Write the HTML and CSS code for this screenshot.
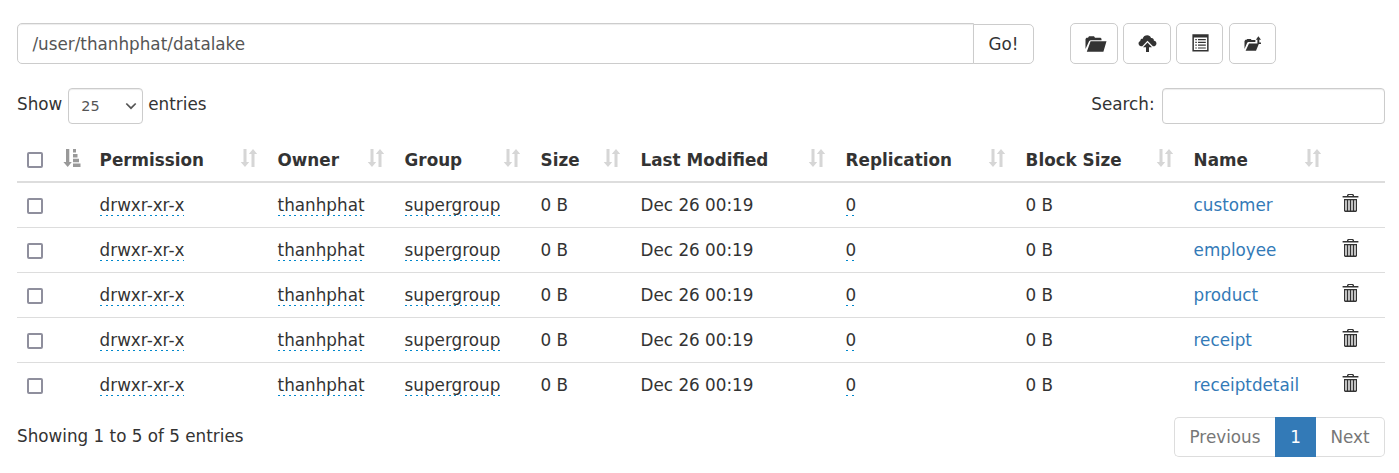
FILE: index.html
```
<!DOCTYPE html>
<html lang="en">
<head>
<meta charset="utf-8">
<title>Browse Directory</title>
<link rel="stylesheet" href="styles.css">
</head>
<body>
<svg class="defs" aria-hidden="true">
  <symbol id="sort" viewBox="0 0 18 18"><path d="M3.500 0h3v13h2.700L5 18 .700 13h2.800zM11.500 18h3V5h2.700L13 0 8.800 5h2.700z"/></symbol>
  <symbol id="sorted" viewBox="0 0 18 18"><path d="M3 0h3.300v13h2.500L4.700 18 .400 13H3zM10 0h3v3.400h-3zM10 5h4.500v3.400H10zM10 9.800h6v3.400h-6zM10 14.600h7.500V18H10z"/></symbol>
  <symbol id="trash" viewBox="0 0 17 18"><path fill-rule="evenodd" d="M5 2V1l1-1h5l1 1v1h4.400v1.500H.6V2zm1.500 0h4v-.9h-4zM2 5h13v12l-1 1H3l-1-1zm1.300 1.300v10.300h1.400V6.300zm3 0v10.300h1.400V6.300zm3 0v10.300h1.400V6.300zm3 0v10.300h1.400V6.300z"/></symbol>
</svg>
<main class="page">
  <div class="toolbar">
    <div class="path-group">
      <input class="path" type="text" value="/user/thanhphat/datalake">
      <button class="go">Go!</button>
    </div>
    <div class="actions">
      <button class="action folder" aria-label="Create directory"><svg width="22" height="16" viewBox="0 0 22 16"><path d="M.5 13V3l1-1.300H3L4 .3h5l1 1.400h5.500l1 1V4.200H5.500l-1.300.8zM5.600 5.200h15.900L18.400 15.800H1.800z"/></svg></button>
      <button class="action" aria-label="Upload files"><svg width="19" height="18" viewBox="0 0 19 18"><path d="M4.300 11.200H2.800C.2 10.500-.4 7.200 2.300 6 2.200 4 3.700 3.400 4.700 3.700 5.500-.2 12-1 13 3c2-.3 3 1 2.800 2.500 3.200.500 3.600 4.500.7 5.700h-1.600L9.500 5.800z"/><path d="M9.500 7.500 14 12.200h-3V17H8v-4.800H5z"/></svg></button>
      <button class="action narrow list" aria-label="Cut and paste"><svg width="17" height="18" viewBox="0 0 17 18"><path fill-rule="evenodd" d="M.4.300h16.200v17.200H.4zM1.900 3.500v12.500h13.200V3.500z"/><path d="M3.300 5h1.500v1.200H3.300zM6 5h7.800v1.200H6zM3.300 7.800h1.500V9H3.300zM6 7.800h7.800V9H6zM3.300 10.600h1.500v1.200H3.300zM6 10.600h7.800v1.200H6zM3.300 13.400h1.500v1.200H3.300zM6 13.400h7.800v1.200H6z"/></svg></button>
      <button class="action narrow" aria-label="Parent directory"><svg width="18" height="16" viewBox="0 0 18 16"><path d="M.5 13V5l1-1.200h1L3.300 3h3.500l.8.900h3.800V6H4.200l-1 .8zM5 7.500h10l-3 7.200H1.600z"/><path d="M11.800 3.700 14.400.3 17 3.700h-1.700v2.800H17v1.600h-3.600V3.700z"/></svg></button>
    </div>
  </div>

  <div class="controls">
    <label class="length">Show
      <span class="select">25<svg width="12" height="8" viewBox="0 0 12 8"><path d="m1.300 1.500 4.700 4.700 4.700-4.700"/></svg></span>
      entries</label>
    <label class="search">Search: <input type="text"></label>
  </div>

  <table class="files">
    <colgroup><col class="c-check"><col class="c-perm"><col class="c-owner"><col class="c-group"><col class="c-size"><col class="c-date"><col class="c-repl"><col class="c-block"><col class="c-name"><col></colgroup>
    <thead>
      <tr>
        <th><div class="head"><input type="checkbox"><svg class="sort active"><use href="#sorted"/></svg></div></th>
        <th><div class="head">Permission<svg class="sort"><use href="#sort"/></svg></div></th>
        <th><div class="head">Owner<svg class="sort"><use href="#sort"/></svg></div></th>
        <th><div class="head">Group<svg class="sort"><use href="#sort"/></svg></div></th>
        <th><div class="head">Size<svg class="sort"><use href="#sort"/></svg></div></th>
        <th><div class="head">Last Modified<svg class="sort"><use href="#sort"/></svg></div></th>
        <th><div class="head">Replication<svg class="sort"><use href="#sort"/></svg></div></th>
        <th><div class="head">Block Size<svg class="sort"><use href="#sort"/></svg></div></th>
        <th><div class="head">Name<svg class="sort"><use href="#sort"/></svg></div></th>
        <th></th>
      </tr>
    </thead>
    <tbody>
      <tr><td><input type="checkbox"></td><td><span class="edit">drwxr-xr-x</span></td><td><span class="edit">thanhphat</span></td><td><span class="edit">supergroup</span></td><td>0 B</td><td>Dec 26 00:19</td><td><span class="edit">0</span></td><td>0 B</td><td><a>customer</a></td><td><svg class="trash"><use href="#trash"/></svg></td></tr>
      <tr><td><input type="checkbox"></td><td><span class="edit">drwxr-xr-x</span></td><td><span class="edit">thanhphat</span></td><td><span class="edit">supergroup</span></td><td>0 B</td><td>Dec 26 00:19</td><td><span class="edit">0</span></td><td>0 B</td><td><a>employee</a></td><td><svg class="trash"><use href="#trash"/></svg></td></tr>
      <tr><td><input type="checkbox"></td><td><span class="edit">drwxr-xr-x</span></td><td><span class="edit">thanhphat</span></td><td><span class="edit">supergroup</span></td><td>0 B</td><td>Dec 26 00:19</td><td><span class="edit">0</span></td><td>0 B</td><td><a>product</a></td><td><svg class="trash"><use href="#trash"/></svg></td></tr>
      <tr><td><input type="checkbox"></td><td><span class="edit">drwxr-xr-x</span></td><td><span class="edit">thanhphat</span></td><td><span class="edit">supergroup</span></td><td>0 B</td><td>Dec 26 00:19</td><td><span class="edit">0</span></td><td>0 B</td><td><a>receipt</a></td><td><svg class="trash"><use href="#trash"/></svg></td></tr>
      <tr><td><input type="checkbox"></td><td><span class="edit">drwxr-xr-x</span></td><td><span class="edit">thanhphat</span></td><td><span class="edit">supergroup</span></td><td>0 B</td><td>Dec 26 00:19</td><td><span class="edit">0</span></td><td>0 B</td><td><a>receiptdetail</a></td><td><svg class="trash"><use href="#trash"/></svg></td></tr>
    </tbody>
  </table>

  <div class="footer">
    <div class="info">Showing 1 to 5 of 5 entries</div>
    <div class="pages"><span class="prev">Previous</span><span class="current">1</span><span class="next">Next</span></div>
  </div>
</main>
</body>
</html>
```

FILE: styles.css
```
* { box-sizing: border-box; }
body {
  margin: 0;
  background: #fff;
  color: #333;
  font: 16.8px/24px "DejaVu Sans", sans-serif;
  overflow: hidden;
}
.defs { display: none; }
.page { padding: 23px 14px 0 17px; }
input, button { font: inherit; color: inherit; margin: 0; }

.toolbar { display: flex; gap: 36px; height: 41px; }
.path-group { display: flex; width: 1017px; align-items: flex-end; }
.path {
  width: 957px;
  height: 41px;
  padding: 0 14.4px;
  border: 1px solid #ccc;
  border-radius: 5px 0 0 5px;
  box-shadow: inset 0 1px 1px rgba(0, 0, 0, .075);
  color: #555;
}
.go {
  width: 61px;
  height: 40px;
  margin-left: -1px;
  padding: 0;
  border: 1px solid #ccc;
  border-radius: 0 5px 5px 0;
  background: #fff;
}
.actions { display: flex; gap: 5px; }
.action {
  display: flex;
  align-items: center;
  justify-content: center;
  width: 48px;
  height: 41px;
  padding: 0;
  border: 1px solid #ccc;
  border-radius: 5px;
  background: #fff;
}
.action.narrow { width: 47px; }
.action.narrow + .narrow { margin-left: 1px; }
.action svg { fill: #333; }
.action.folder { padding-left: 4px; }
.action.list { padding: 0 0 2px 2px; }

.controls { display: flex; justify-content: space-between; height: 36px; margin-top: 24px; }
.length, .search { display: flex; line-height: 32px; }
.select {
  display: flex;
  align-items: center;
  justify-content: space-between;
  width: 75px;
  height: 36px;
  margin: 0 5px 0 6px;
  padding: 0 5px 0 12px;
  border: 1px solid #ccc;
  border-radius: 4px;
  box-shadow: inset 0 1px 1px rgba(0, 0, 0, .075);
  color: #555;
  font-size: 14.4px;
}
.select svg { fill: none; stroke: #555; stroke-width: 1.7; }
.search input {
  width: 223px;
  height: 36px;
  margin-left: 7.4px;
  border: 1px solid #ccc;
  border-radius: 4px;
  box-shadow: inset 0 1px 1px rgba(0, 0, 0, .075);
}

.files {
  width: 1368px;
  margin-top: 13px;
  border-collapse: separate;
  border-spacing: 0;
  table-layout: fixed;
}
.c-check { width: 73px; }
.c-perm { width: 178px; }
.c-owner { width: 127px; }
.c-group { width: 136px; }
.c-size { width: 100px; }
.c-date { width: 205px; }
.c-repl { width: 180px; }
.c-block { width: 168px; }
.c-name { width: 148px; }
th, td { padding: 0 9.6px; text-align: left; white-space: nowrap; }
th { height: 46px; padding-top: 2px; border-bottom: 2px solid #ddd; }
td { height: 45px; border-bottom: 1px solid #ddd; vertical-align: middle; }
tbody tr:last-child td { border-bottom-color: transparent; }
.head { display: flex; align-items: center; justify-content: space-between; }
.sort { width: 18px; height: 18px; margin: -5px 0 0; fill: #d6d6d6; }
.sort.active { margin-right: -1px; fill: #999; }
input[type="checkbox"] {
  display: block;
  appearance: none;
  width: 16px;
  height: 16px;
  border: 2px solid #8f8f9d;
  border-radius: 2px;
  background: #fff;
}
td input[type="checkbox"] { margin-top: 1px; }
.edit {
  padding-bottom: 1px;
  background: repeating-linear-gradient(90deg, #0088cc 0 2px, transparent 2px 5.5px) left bottom / 100% 1px no-repeat;
}
a { color: #337ab7; }
.trash { display: block; width: 17px; height: 18px; margin-top: -5px; fill: #333; }

.footer { display: flex; justify-content: space-between; margin-top: 9px; }
.info { margin-top: 7px; }
.pages { display: flex; height: 40px; line-height: 38px; color: #777; }
.pages span { border: 1px solid #ddd; text-align: center; }
.pages .prev { width: 101px; border-radius: 5px 0 0 5px; border-right: 0; }
.pages .current { width: 41px; border-color: #337ab7; background: #337ab7; color: #fff; }
.pages .next { width: 69px; border-left: 0; border-radius: 0 5px 5px 0; }
```
